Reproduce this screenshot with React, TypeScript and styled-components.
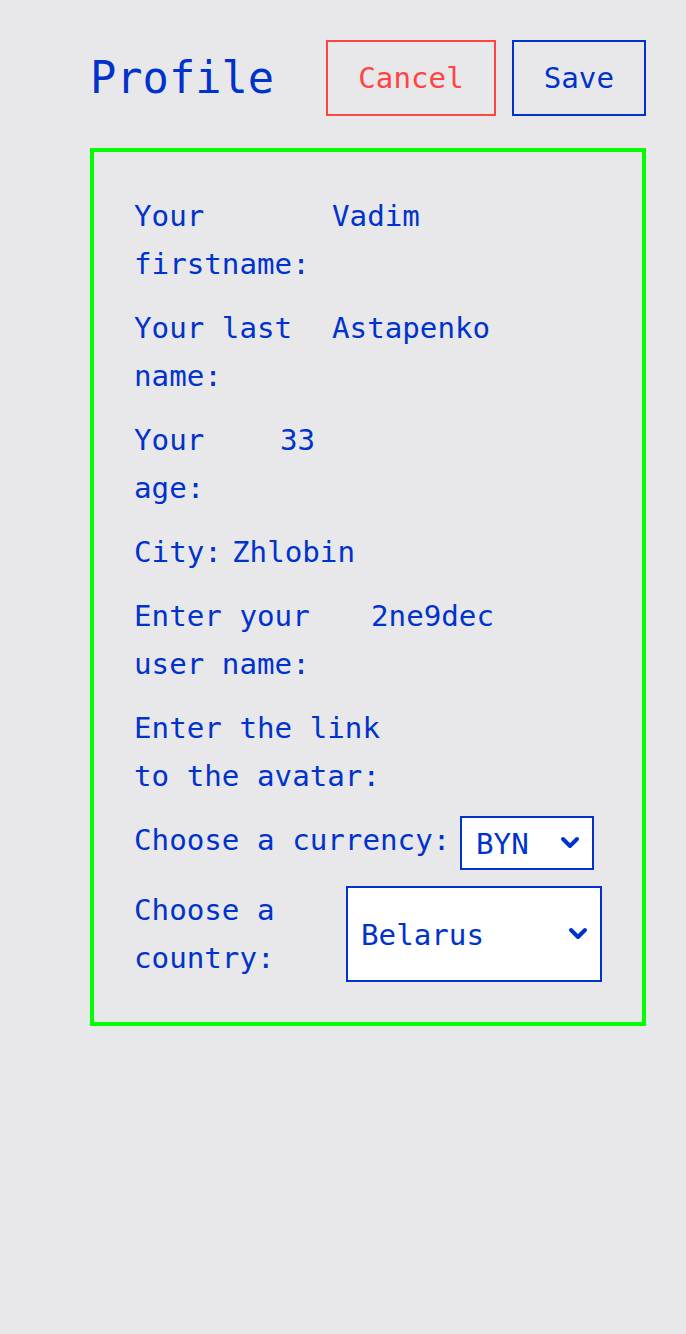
import React from "react";
import styled, { createGlobalStyle } from "styled-components";

const BLUE = "#0033cc";
const RED = "#ff4444";
const GREEN = "#00ff00";
const FONT = `"DejaVu Sans Mono", "Liberation Mono", monospace`;

const Global = createGlobalStyle`
  html, body { margin: 0; padding: 0; background: #e8e8ea; }
  body { font-family: ${FONT}; color: ${BLUE}; }
  * { box-sizing: border-box; }
`;

const Page = styled.div`
  min-height: 1334px;
  background: #e8e8ea;
  padding: 40px 40px 40px 90px;
  display: flex;
  flex-direction: column;
  gap: 32px;
`;

const Header = styled.header`
  display: flex;
  align-items: center;
  justify-content: space-between;
`;

const Title = styled.h1`
  margin: 0;
  font-family: ${FONT};
  font-weight: 400;
  font-size: 43.7px;
  line-height: 56px;
  color: ${BLUE};
`;

const Actions = styled.div`
  display: flex;
  gap: 16px;
`;

const Button = styled.button<{ $variant: "cancel" | "save" }>`
  font-family: ${FONT};
  font-size: 29.2px;
  line-height: 48px;
  padding: 12px 30px;
  background: transparent;
  border: 2px solid ${(p) => (p.$variant === "cancel" ? RED : BLUE)};
  color: ${(p) => (p.$variant === "cancel" ? RED : BLUE)};
  cursor: pointer;
`;

const Card = styled.form`
  border: 4px solid ${GREEN};
  padding: 40px;
  display: flex;
  flex-direction: column;
  gap: 16px;
`;

const Row = styled.div`
  display: flex;
  align-items: flex-start;
`;

const Label = styled.label<{ $w: number }>`
  flex: 0 0 ${(p) => p.$w}px;
  font-size: 29.2px;
  line-height: 48px;
  color: ${BLUE};
`;

const Input = styled.input`
  flex: 1;
  min-width: 0;
  border: none;
  background: transparent;
  padding: 0;
  font-family: ${FONT};
  font-size: 29.2px;
  line-height: 48px;
  height: 48px;
  color: ${BLUE};
  outline: none;
`;

const SelectWrap = styled.div<{ $w: number; $h: number }>`
  position: relative;
  width: ${(p) => p.$w}px;
  height: ${(p) => p.$h}px;
`;

const Select = styled.select<{ $pl: number }>`
  appearance: none;
  -webkit-appearance: none;
  width: 100%;
  height: 100%;
  background: #fff;
  border: 2px solid ${BLUE};
  border-radius: 0;
  padding: 2px 40px 0 ${(p) => p.$pl}px;
  font-family: ${FONT};
  font-size: 29.2px;
  color: ${BLUE};
  outline: none;
`;

const Chevron = styled.svg`
  position: absolute;
  right: 14px;
  top: 50%;
  transform: translateY(-50%);
  pointer-events: none;
`;

const ChevronIcon = () => (
  <Chevron width="20" height="14" viewBox="0 0 20 14">
    <polyline
      points="3,3 10,10 17,3"
      fill="none"
      stroke={BLUE}
      strokeWidth="4"
      strokeLinecap="round"
      strokeLinejoin="round"
    />
  </Chevron>
);

export default function App() {
  return (
    <>
      <Global />
      <Page>
        <Header>
          <Title>Profile</Title>
          <Actions>
            <Button type="button" $variant="cancel">Cancel</Button>
            <Button type="button" $variant="save">Save</Button>
          </Actions>
        </Header>
        <Card onSubmit={(e) => e.preventDefault()}>
          <Row>
            <Label $w={198}>Your firstname:</Label>
            <Input defaultValue="Vadim" />
          </Row>
          <Row>
            <Label $w={198}>Your last name:</Label>
            <Input defaultValue="Astapenko" />
          </Row>
          <Row>
            <Label $w={146}>Your age:</Label>
            <Input defaultValue="33" />
          </Row>
          <Row>
            <Label $w={98}>City:</Label>
            <Input defaultValue="Zhlobin" />
          </Row>
          <Row>
            <Label $w={237}>Enter your user name:</Label>
            <Input defaultValue="2ne9dec" />
          </Row>
          <Row>
            <Label $w={262}>Enter the link to the avatar:</Label>
            <Input defaultValue="" />
          </Row>
          <Row>
            <Label $w={326}>Choose a currency:</Label>
            <SelectWrap $w={134} $h={54}>
              <Select $pl={14} defaultValue="BYN">
                <option value="BYN">BYN</option>
                <option value="USD">USD</option>
                <option value="EUR">EUR</option>
              </Select>
              <ChevronIcon />
            </SelectWrap>
          </Row>
          <Row>
            <Label $w={212}>Choose a country:</Label>
            <SelectWrap $w={256} $h={96}>
              <Select $pl={13} defaultValue="Belarus">
                <option value="Belarus">Belarus</option>
                <option value="Russia">Russia</option>
                <option value="Ukraine">Ukraine</option>
              </Select>
              <ChevronIcon />
            </SelectWrap>
          </Row>
        </Card>
      </Page>
    </>
  );
}
